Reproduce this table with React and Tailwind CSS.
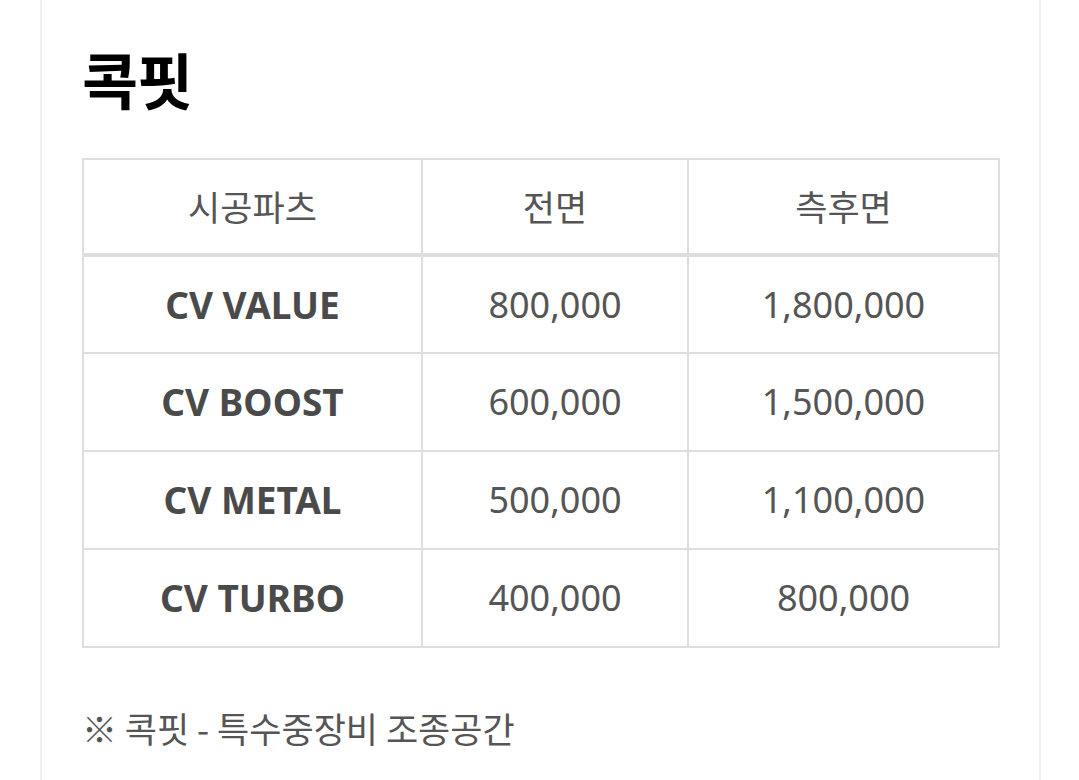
import React from "react";

const rows = [
  ["CV VALUE", "800,000", "1,800,000"],
  ["CV BOOST", "600,000", "1,500,000"],
  ["CV METAL", "500,000", "1,100,000"],
  ["CV TURBO", "400,000", "800,000"],
];

const font = { fontFamily: '"Noto Sans", "Noto Sans CJK KR", sans-serif' };
const kr = { fontFamily: '"Noto Sans CJK KR", sans-serif' };

export default function App() {
  return (
    <div className="w-[1079px] h-[780px] bg-white overflow-hidden" style={font}>
      <div className="ml-[40px] w-[1001px] h-full border-x-2 border-[#efefef] pl-[40px] pt-[41px]">
        <h1 className="text-[61px] leading-[76px] font-bold text-black tracking-[-1px]" style={kr}>
          콕핏
        </h1>
        <table className="mt-[41px] w-[916px] table-fixed border-collapse">
          <colgroup>
            <col className="w-[339px]" />
            <col className="w-[266px]" />
            <col className="w-[311px]" />
          </colgroup>
          <thead>
            <tr className="h-[96px]">
              {["시공파츠", "전면", "측후면"].map((h) => (
                <th
                  key={h}
                  className="border-2 border-[#dedede] border-b-4 text-center text-[35px] font-normal text-[#555]"
                  style={kr}
                >
                  {h}
                </th>
              ))}
            </tr>
          </thead>
          <tbody>
            {rows.map((r) => (
              <tr key={r[0]} className="h-[98px]">
                <td className="border-2 border-[#dedede] text-center text-[37px] font-bold text-[#4a4a4a]">{r[0]}</td>
                <td className="border-2 border-[#dedede] text-center text-[36px] text-[#555]">{r[1]}</td>
                <td className="border-2 border-[#dedede] text-center text-[36px] text-[#555]">{r[2]}</td>
              </tr>
            ))}
          </tbody>
        </table>
        <p className="mt-[54px] text-[35px] text-[#555]" style={kr}>
          ※ 콕핏 - 특수중장비 조종공간
        </p>
      </div>
    </div>
  );
}
